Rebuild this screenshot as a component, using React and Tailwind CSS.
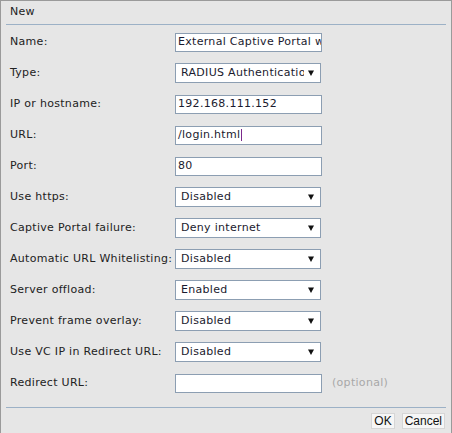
const rows = [
  { label: 'Name:', kind: 'input', value: 'External Captive Portal with RADIUS' },
  { label: 'Type:', kind: 'select', value: 'RADIUS Authentication' },
  { label: 'IP or hostname:', kind: 'input', value: '192.168.111.152' },
  { label: 'URL:', kind: 'input', value: '/login.html', caret: true },
  { label: 'Port:', kind: 'input', value: '80' },
  { label: 'Use https:', kind: 'select', value: 'Disabled' },
  { label: 'Captive Portal failure:', kind: 'select', value: 'Deny internet' },
  { label: 'Automatic URL Whitelisting:', kind: 'select', value: 'Disabled' },
  { label: 'Server offload:', kind: 'select', value: 'Enabled' },
  { label: 'Prevent frame overlay:', kind: 'select', value: 'Disabled' },
  { label: 'Use VC IP in Redirect URL:', kind: 'select', value: 'Disabled' },
  { label: 'Redirect URL:', kind: 'input', value: '', hint: '(optional)' },
];

function TextBox({ value, caret }) {
  return (
    <div className="flex h-[19px] w-[147px] items-center overflow-hidden whitespace-nowrap border border-[#8c9eb2] bg-white pl-[2px] text-[#1a1a2e]">
      <span>{value}</span>
      {caret && <span className="ml-px h-[12px] w-px bg-[#7b2a8c]" />}
    </div>
  );
}

function Dropdown({ value }) {
  return (
    <div className="flex h-[20px] w-[146px] items-center border border-[#8c9eb2] bg-white pl-[5px] pr-[6px]">
      <span className="mr-[4px] flex-1 overflow-hidden whitespace-nowrap text-[#1a1a2e]">{value}</span>
      <svg width="6" height="6" viewBox="0 0 6 6" className="shrink-0">
        <path d="M0 0.5 H6 L3 6 Z" fill="#111" />
      </svg>
    </div>
  );
}

export default function App() {
  return (
    <div className="h-[433px] w-[452px] overflow-hidden border-l border-r border-t border-[#9a9a9a] bg-[#e6e6e6] text-[11px] tracking-[0.3px] text-[#222] [font-family:'DejaVu_Sans',Verdana,sans-serif]">
      <div className="mx-[5px] flex h-[24px] items-center border-b border-[#9cb1c6] pl-[4px]">New</div>

      <div className="flex flex-col gap-[11px] pt-[7px]">
        {rows.map((row) => (
          <div key={row.label} className="flex h-[20px] items-center">
            <div className="w-[174px] whitespace-nowrap pl-[9px]">{row.label}</div>
            {row.kind === 'input' ? <TextBox value={row.value} caret={row.caret} /> : <Dropdown value={row.value} />}
            {row.hint && <span className="ml-[10px] text-[#a8a8a8]">{row.hint}</span>}
          </div>
        ))}
      </div>

      <div className="mx-[5px] mt-[14px] border-t border-[#9cb1c6]" />
      <div className="flex justify-end gap-[7px] pr-[6px] pt-[5px] text-[12px] tracking-normal text-[#111] [font-family:'Liberation_Sans',Arial,sans-serif]">
        <div className="flex h-[16px] items-center border border-[#d6d6d6] bg-[#f6f6f6] px-[2px]">OK</div>
        <div className="flex h-[16px] items-center border border-[#d6d6d6] bg-[#f6f6f6] px-[2px]">Cancel</div>
      </div>
    </div>
  );
}
